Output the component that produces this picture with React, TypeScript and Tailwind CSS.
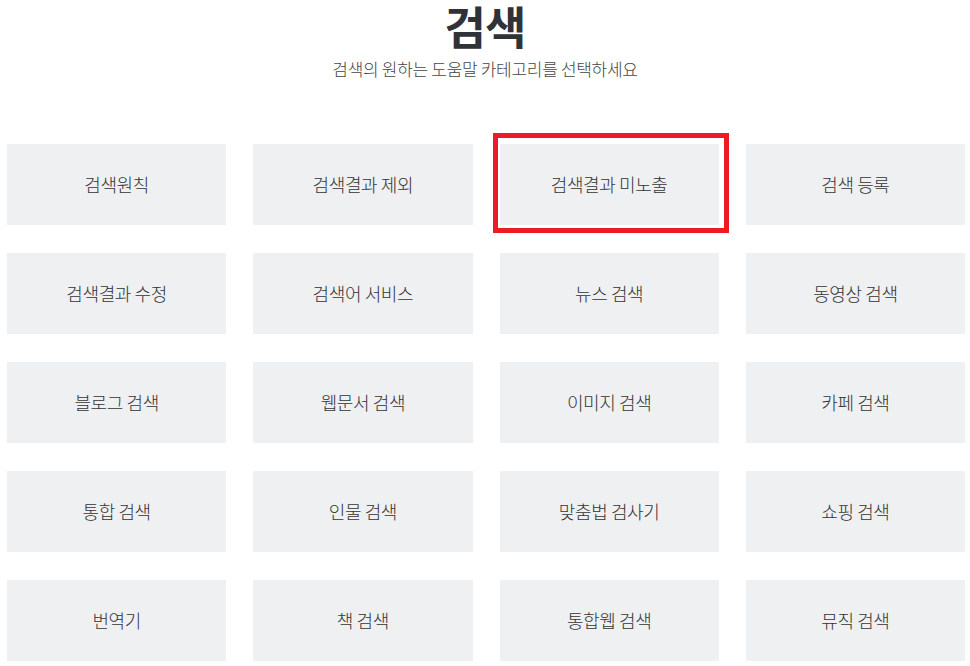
const items = [
  "검색원칙",
  "검색결과 제외",
  "검색결과 미노출",
  "검색 등록",
  "검색결과 수정",
  "검색어 서비스",
  "뉴스 검색",
  "동영상 검색",
  "블로그 검색",
  "웹문서 검색",
  "이미지 검색",
  "카페 검색",
  "통합 검색",
  "인물 검색",
  "맞춤법 검사기",
  "쇼핑 검색",
  "번역기",
  "책 검색",
  "통합웹 검색",
  "뮤직 검색",
]

export default function App() {
  return (
    <div
      className="w-[970px] h-[666px] overflow-hidden bg-white text-[#333]"
      style={{ fontFamily: '"Noto Sans CJK KR", "Noto Sans", sans-serif' }}
    >
      <div className="flex flex-col items-center">
        <h1 className="text-[45px] font-bold leading-[52px] tracking-[-1px] text-[#2f3237]">검색</h1>
        <p className="mt-[5px] text-[17px] leading-[24px] tracking-[-0.3px] font-light text-[#444]">
          검색의 원하는 도움말 카테고리를 선택하세요
        </p>
      </div>

      <div className="mt-[63px] ml-[7px] w-[958px] grid grid-cols-4 gap-x-[27px] gap-y-[28px]">
        {items.map((item, i) => (
          <div
            key={i}
            className="relative h-[81px] bg-[#eff0f2] flex items-center justify-center text-[18px] font-light tracking-[-0.4px] text-[#333]"
          >
            {item}
            {i === 2 && (
              <div className="absolute left-[-7px] top-[-11px] right-[-10px] bottom-[-8px] border-[5px] border-[#ed1c24]" />
            )}
          </div>
        ))}
      </div>
    </div>
  )
}
